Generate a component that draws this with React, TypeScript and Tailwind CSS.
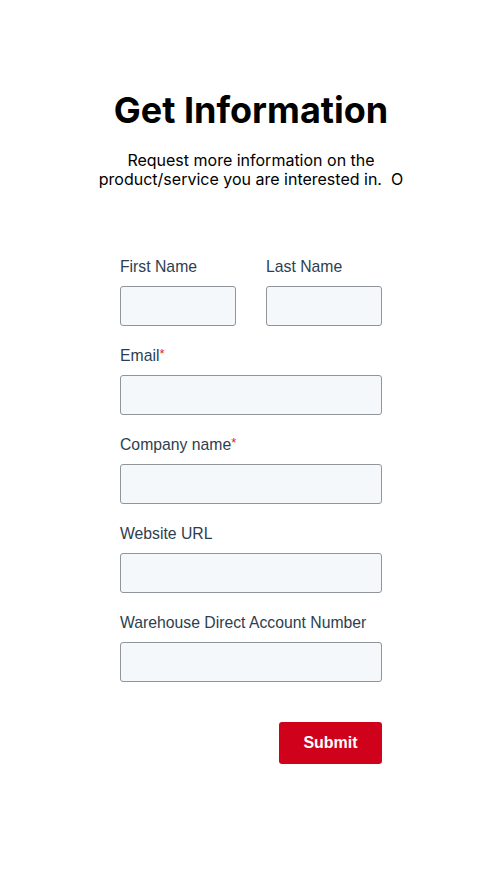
import React from "react";

function Field({ label, required }: { label: string; required?: boolean }) {
  return (
    <div className="flex flex-col">
      <label className="text-[15.75px] leading-[20px] text-[#2d3e50] mb-[9px]">
        {label}
        {required && <span className="text-[#ec1c24] text-[13px] align-top leading-[16px]">*</span>}
      </label>
      <input className="h-[40px] w-full rounded-[3px] border border-[#8f959b] bg-[#f5f8fa] px-3 outline-none" />
    </div>
  );
}

export default function App() {
  return (
    <div className="min-h-[884px] w-full bg-white flex flex-col items-center pt-[88px]">
      <h1 className="font-['Inter',sans-serif] text-[36px] leading-[44px] font-bold text-black text-center">
        Get Information
      </h1>
      <p className="mt-[19px] font-['Inter',sans-serif] text-[16px] leading-[19px] text-black text-center whitespace-pre">
        {"Request more information on the\nproduct/service you are interested in.  O"}
      </p>
      <form className="mt-[68px] w-[262px] flex flex-col gap-[20px] font-['Liberation_Sans',Arial,sans-serif]">
        <div className="grid grid-cols-2 gap-[30px]">
          <Field label="First Name" />
          <Field label="Last Name" />
        </div>
        <Field label="Email" required />
        <Field label="Company name" required />
        <Field label="Website URL" />
        <Field label="Warehouse Direct Account Number" />
        <div className="flex justify-end mt-[20px]">
          <button
            type="button"
            className="h-[42px] w-[103px] rounded-[3px] bg-[#d0021b] text-white font-bold text-[16px]"
          >
            Submit
          </button>
        </div>
      </form>
    </div>
  );
}
